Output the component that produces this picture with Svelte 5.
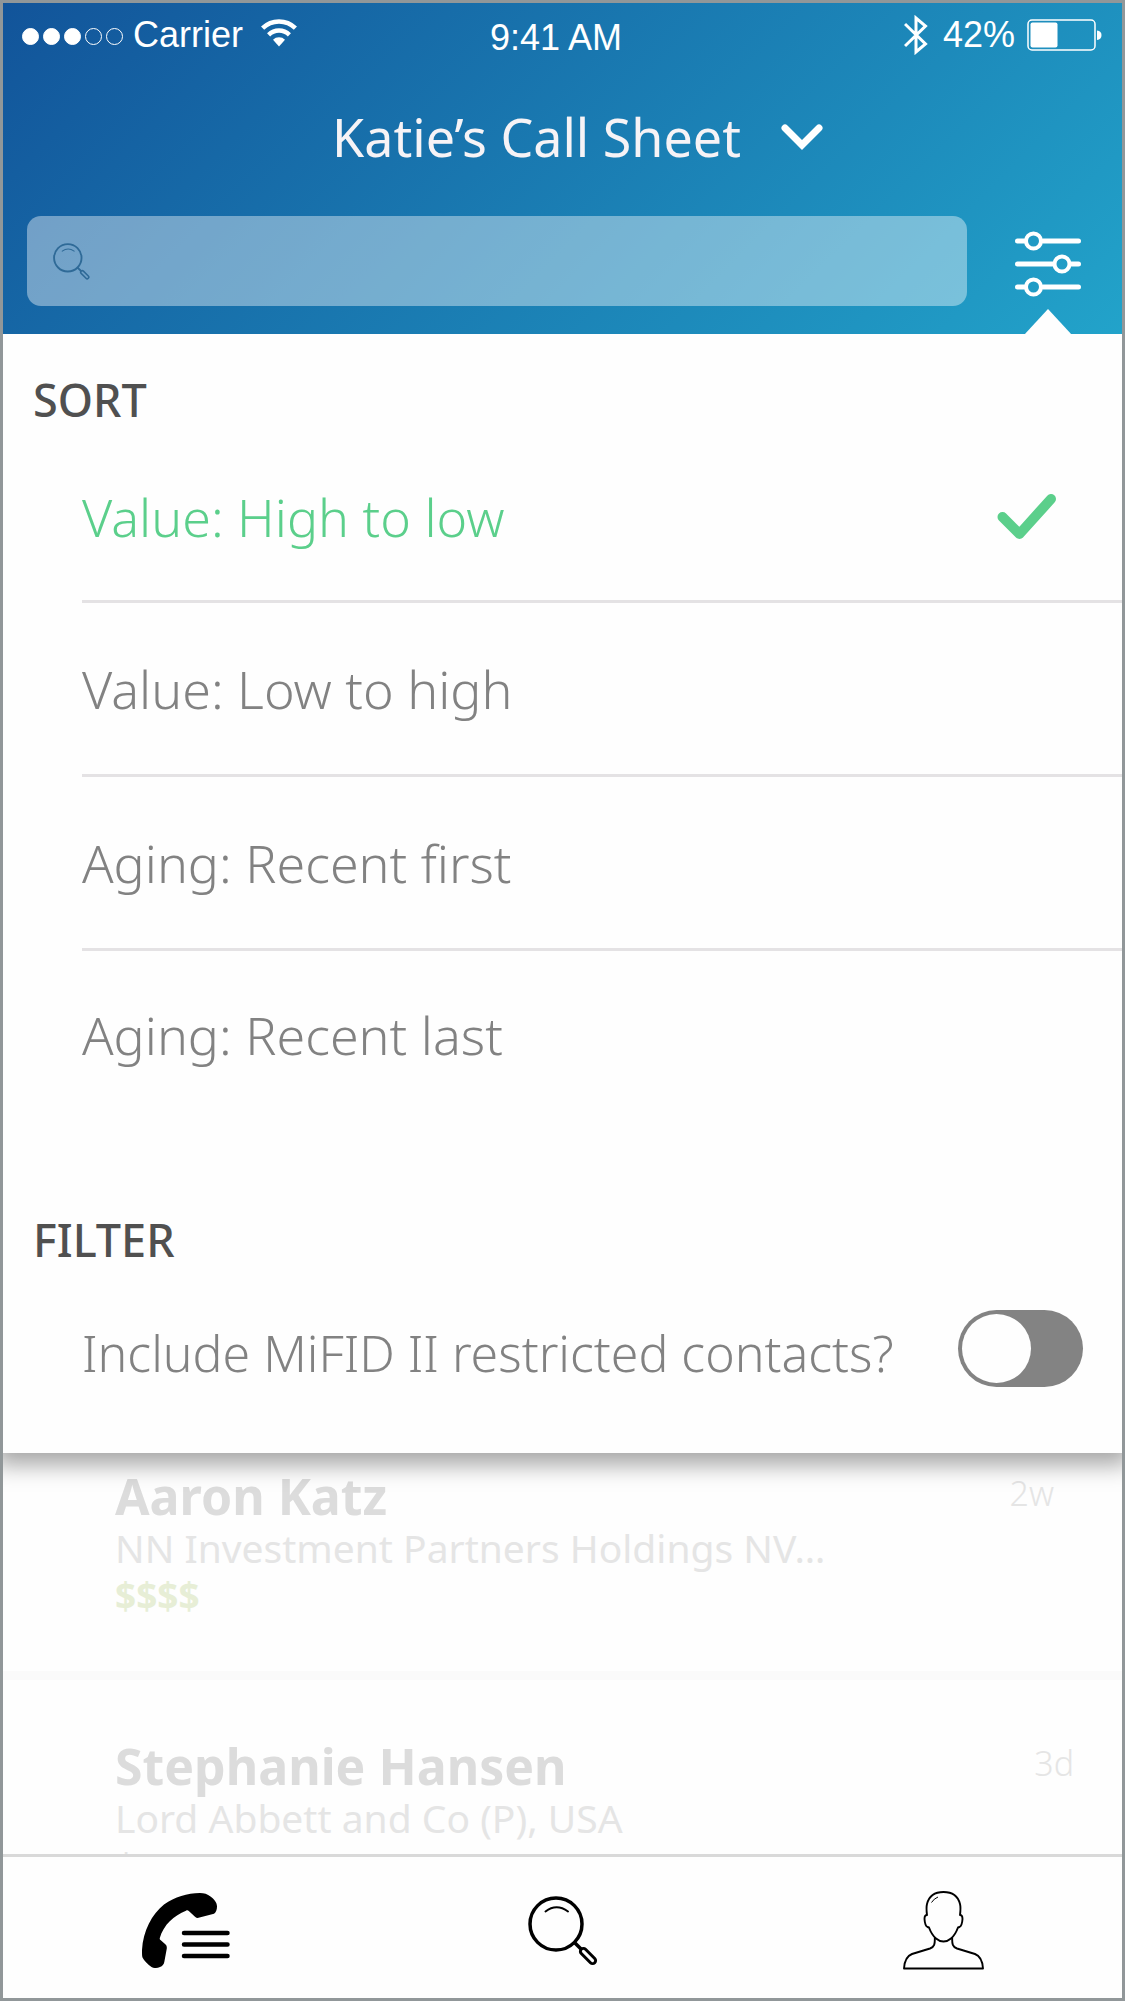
<script lang="ts">
	interface Contact {
		name: string;
		firm: string;
		value: string;
		age: string;
		rated?: boolean;
	}

	const sortOptions = [
		'Value: High to low',
		'Value: Low to high',
		'Aging: Recent first',
		'Aging: Recent last'
	];

	const contacts: Contact[] = [
		{
			name: 'Aaron Katz',
			firm: 'NN Investment Partners Holdings NV…',
			value: '$$$$',
			age: '2w',
			rated: true
		},
		{
			name: 'Stephanie Hansen',
			firm: 'Lord Abbett and Co (P), USA',
			value: '$28,257',
			age: '3d'
		}
	];

	const signal = [true, true, true, false, false];

	let sort = $state(sortOptions[0]);
	let includeRestricted = $state(false);
	let query = $state('');
</script>

{#snippet magnifier()}
	<svg class="magnifier" viewBox="0 0 70 70" fill="none" stroke="currentColor" aria-hidden="true">
		<circle cx="28" cy="28" r="26" stroke-width="3.5" />
		<path d="M17.5 15.5Q28.5 7 40 15.5" stroke-width="2" stroke-linecap="round" />
		<path d="M46.5 46.5L53 53" stroke-width="3.5" />
		<rect
			x="-9.5"
			y="-3"
			width="19"
			height="6"
			rx="3"
			stroke-width="3"
			transform="translate(60 60) rotate(45)"
		/>
	</svg>
{/snippet}

<div class="app">
	<header>
		<div class="status">
			<div class="carrier">
				<span class="signal">
					{#each signal as on}
						<i class:on></i>
					{/each}
				</span>
				<span>Carrier</span>
				<svg class="wifi" width="36" height="28" viewBox="0 0 36 28" aria-hidden="true">
					<g fill="none" stroke="#fff" stroke-width="4.5">
						<path d="M1.6 9.2A23.5 23.5 0 0 1 34.4 9.2" />
						<path d="M7.6 15.8A15 15 0 0 1 28.4 15.8" />
					</g>
					<path d="M12 20.8A8.5 8.5 0 0 1 24 20.8L18 27.5Z" fill="#fff" />
				</svg>
			</div>
			<time>9:41 AM</time>
			<div class="power">
				<svg class="bluetooth" width="24" height="40" viewBox="0 0 24 40" fill="none" stroke="#fff" stroke-width="3" aria-hidden="true">
					<path d="M1 9L21.5 29L12 37V3L21.5 11L1 31" />
				</svg>
				<span>42%</span>
				<svg width="75" height="32" viewBox="0 0 75 32" aria-hidden="true">
					<rect x="1" y="1" width="67" height="30" rx="4" fill="none" stroke="#fff" stroke-width="1.5" />
					<rect x="3.5" y="3.5" width="27" height="25" rx="2" fill="#fff" />
					<path d="M70 11.5Q74.5 12 74.5 16Q74.5 20.5 70 21Z" fill="#fff" />
				</svg>
			</div>
		</div>

		<h1>
			<button type="button" class="sheet">
				Katie’s Call Sheet
				<svg width="42" height="27" viewBox="0 0 42 27" fill="none" aria-hidden="true">
					<path d="M4 4L21 21L38 4" stroke="#fff" stroke-width="7" stroke-linecap="round" />
				</svg>
			</button>
		</h1>

		<div class="search-row">
			<label class="search">
				{@render magnifier()}
				<input type="search" aria-label="Search contacts" bind:value={query} />
			</label>
			<button type="button" class="options" aria-label="Sort and filter" aria-expanded="true">
				<svg width="66" height="66" viewBox="0 0 66 66" fill="none" stroke="#fff" aria-hidden="true">
					<g stroke-width="5" stroke-linecap="round">
						<path d="M2.5 10H10M28 10H63.5" />
						<path d="M2.5 33H38M56 33H63.5" />
						<path d="M2.5 56H10M28 56H63.5" />
					</g>
					<g stroke-width="4">
						<circle cx="18.5" cy="10" r="7.5" />
						<circle cx="47" cy="33" r="7.5" />
						<circle cx="18.5" cy="56" r="7.5" />
					</g>
				</svg>
			</button>
		</div>
	</header>

	<section class="panel">
		<fieldset>
			<legend>SORT</legend>
			{#each sortOptions as option}
				<label class="sort" class:selected={sort === option}>
					<input type="radio" name="sort" value={option} bind:group={sort} />
					{option}
					{#if sort === option}
						<svg width="60" height="48" viewBox="0 0 60 48" fill="none" aria-hidden="true">
							<path
								d="M5.5 24L22.5 41L54 6"
								stroke="currentColor"
								stroke-width="10"
								stroke-linecap="round"
								stroke-linejoin="round"
							/>
						</svg>
					{/if}
				</label>
			{/each}
		</fieldset>

		<h2>FILTER</h2>
		<div class="filter">
			<label for="restricted">Include MiFID II restricted contacts?</label>
			<input id="restricted" type="checkbox" role="switch" bind:checked={includeRestricted} />
		</div>
	</section>

	<ul class="contacts">
		{#each contacts as contact}
			<li>
				<div>
					<h3>{contact.name}</h3>
					<p>{contact.firm}</p>
					<p class:rated={contact.rated}>{contact.value}</p>
				</div>
				<span class="age">{contact.age}</span>
			</li>
		{/each}
	</ul>

	<nav>
		<button type="button" aria-label="Call sheet">
			<svg width="88" height="75" viewBox="0 0 88 75" aria-hidden="true">
				<path
					d="M58 0C62 0 65.5 1 68.5 3.5C72 6 75 9.5 75 13.5C75 16.5 74 19.5 72 20.8L57.5 24.6C55.5 25.2 54.5 25 53 23.7L46.8 18C45.8 17.2 45 17.2 44 17.8C32 22.5 21.5 32 17.8 45C17.6 46 17.8 46.5 18.5 47L23.3 51.3C24.8 52.8 25 54 24.7 56L22.3 69C21.8 71.5 20.5 73 18 74C15 75.2 12 75.5 9.5 74C6 71.5 2 67.5 .5 64.5C0 63 0 61 0 57C1 38 10 21 22 11.5C33 4 45 0 58 0Z"
				/>
				<path
					d="M42 40H85.5M42 51.5H85.5M42 63H85.5"
					stroke="#000"
					stroke-width="4.5"
					stroke-linecap="round"
				/>
			</svg>
		</button>
		<button type="button" aria-label="Search">
			{@render magnifier()}
		</button>
		<button type="button" aria-label="Profile">
			<svg width="81" height="79" viewBox="0 0 81 79" fill="none" stroke="#000" aria-hidden="true">
				<g stroke-width="1.9" stroke-linejoin="round">
					<path
						d="M24 24C22 24 21.5 25 21.5 28C21.7 31 22.5 35 24.5 36L26 36.5C28 42 30 45 33 47.5C37.5 51.5 43.5 51.5 48 47.5C51 45 53 42 55 36.5L56.5 36C58.5 35 59.3 31 59.5 28C59.5 25 59 24 57 24C57.5 20 57.8 16 57 13C55 5 49 1 40.5 1C32 1 26 5 24 13C23.2 16 23.5 20 24 24Z"
					/>
					<path
						d="M31.8 47C32 53 31.5 56 27 57.5L9 63C4 65 1.5 69 1 77.5H80C79.5 69 77 65 72 63L54 57.5C49.5 56 49 53 49.2 47"
					/>
				</g>
				<path d="M28.5 11.5Q31 7.5 35 6" stroke-width="1" />
			</svg>
		</button>
	</nav>
</div>

<style>
	:global(body) {
		margin: 0;
	}

	.app {
		box-sizing: border-box;
		height: 100vh;
		display: flex;
		flex-direction: column;
		border: 3px solid #919799;
		background: #fefefe;
		font-family: 'Noto Sans', 'Open Sans', sans-serif;
	}

	header,
	.panel,
	nav {
		flex-shrink: 0;
	}

	button {
		padding: 0;
		border: 0;
		background: none;
		color: inherit;
		font: inherit;
		cursor: pointer;
	}

	svg {
		display: block;
		flex-shrink: 0;
	}

	header {
		padding-bottom: 28px;
		background: linear-gradient(135deg, #12549a, #22a3ca);
		color: #fff;
	}

	.status {
		display: grid;
		grid-template-columns: 1fr auto 1fr;
		align-items: center;
		height: 64px;
		padding: 0 20px 0 19px;
		font-family: 'Liberation Sans', Arial, sans-serif;
		font-size: 36px;
		line-height: 40px;
	}

	.status time {
		padding: 6px 12px 0 0;
	}

	.carrier,
	.power {
		display: flex;
		align-items: center;
	}

	.carrier {
		gap: 10px;
	}

	.wifi {
		margin: 0 0 4px 8px;
	}

	.power {
		justify-content: flex-end;
		gap: 12px;
	}

	.bluetooth {
		margin-right: 3px;
	}

	.signal {
		display: flex;
		gap: 4px;
		padding-top: 2px;
	}

	.signal i {
		box-sizing: border-box;
		width: 17px;
		height: 17px;
		border: 1px solid #fff;
		border-radius: 50%;
	}

	.signal .on {
		background: #fff;
	}

	h1 {
		display: flex;
		justify-content: center;
		margin: 34px 0 43px;
		padding-left: 30px;
		font-size: 52px;
		font-weight: 400;
		line-height: 72px;
	}

	.sheet {
		display: flex;
		align-items: center;
		gap: 40px;
		color: #f6f3f6;
	}

	.search-row {
		display: flex;
		align-items: flex-end;
		gap: 48px;
		padding: 0 41px 0 24px;
	}

	.search {
		flex: 1;
		display: flex;
		align-items: center;
		gap: 20px;
		height: 90px;
		padding: 0 26px;
		border-radius: 14px;
		background: rgba(255, 255, 255, 0.4);
		color: #2f6a97;
	}

	.magnifier {
		width: 70px;
		height: 70px;
	}

	.search .magnifier {
		width: 37px;
		height: 37px;
	}

	.search input {
		flex: 1;
		min-width: 0;
		border: 0;
		outline: 0;
		background: none;
		color: #fff;
		font: inherit;
		font-size: 39px;
	}

	.options {
		position: relative;
		padding-bottom: 9px;
	}

	/* pointer from the options button down to the open panel */
	.options::after {
		content: '';
		position: absolute;
		top: 78px;
		left: 50%;
		margin-left: -24px;
		width: 48px;
		height: 26px;
		background: #fefefe;
		clip-path: polygon(50% 0, 100% 100%, 0 100%);
	}

	.panel {
		position: relative;
		z-index: 1;
		padding: 36px 0 66px;
		background: #fefefe;
		box-shadow: 0 4px 22px 8px rgba(0, 0, 0, 0.35);
		clip-path: inset(0 0 -40px);
		color: #828282;
	}

	fieldset {
		margin: 0;
		padding: 0;
		border: 0;
	}

	legend,
	h2 {
		margin: 0;
		padding: 0 0 0 30px;
		color: #505050;
		font-size: 45px;
		font-weight: 500;
		line-height: 60px;
	}

	h2 {
		margin-top: 92px;
	}

	.sort {
		display: flex;
		align-items: center;
		justify-content: space-between;
		margin-left: 79px;
		padding-right: 65px;
		border-bottom: 3px solid #e4e2e4;
		font-size: 52px;
		font-weight: 350;
		line-height: 171px;
		cursor: pointer;
	}

	.sort:first-of-type {
		padding-top: 3px;
		line-height: 167px;
	}

	.sort:last-child {
		border-bottom: 0;
		line-height: 167px;
	}

	.sort input {
		position: absolute;
		opacity: 0;
	}

	.selected {
		color: #5bcf8b;
	}

	.filter {
		display: flex;
		align-items: center;
		justify-content: space-between;
		padding: 40px 39px 0 79px;
	}

	.filter label {
		padding-top: 8px;
		font-size: 50px;
		font-weight: 350;
		line-height: 68px;
	}

	.filter input {
		appearance: none;
		flex-shrink: 0;
		display: flex;
		box-sizing: border-box;
		width: 125px;
		height: 77px;
		margin: 0;
		padding: 4px;
		border-radius: 39px;
		background: #838383;
		cursor: pointer;
	}

	.filter input::before {
		content: '';
		width: 69px;
		height: 69px;
		border-radius: 50%;
		background: #fefefe;
	}

	.filter input:checked {
		justify-content: flex-end;
		background: #5bcf8b;
	}

	/* starts behind the panel, so the first row is partly covered */
	.contacts {
		flex: 1;
		min-height: 0;
		margin: -43px 0 0;
		padding: 0;
		overflow-y: auto;
		scrollbar-width: none;
		list-style: none;
		color: #e5e5e5;
	}

	.contacts li {
		display: flex;
		align-items: flex-start;
		justify-content: space-between;
		padding: 58px 48px 51px 112px;
		border-bottom: 9px solid #fafafa;
	}

	.contacts li:first-child .age {
		margin-right: 20px;
	}

	h3 {
		margin: 0;
		color: #dcdcdc;
		font-size: 50px;
		font-weight: 700;
		line-height: 56px;
	}

	.contacts p {
		margin: 0;
		font-size: 39px;
		line-height: 48px;
	}

	.contacts .rated {
		color: #e7eed6;
		font-size: 37px;
		font-weight: 700;
	}

	.age {
		font-size: 34px;
		font-weight: 350;
		line-height: 50px;
	}

	nav {
		display: grid;
		grid-template-columns: 1fr auto 1fr;
		align-items: center;
		padding: 34px 138px 28px 139px;
		border-top: 3px solid #d9d9d9;
		color: #000;
	}

	nav button:first-child {
		justify-self: start;
	}

	nav button:last-child {
		justify-self: end;
	}
</style>
